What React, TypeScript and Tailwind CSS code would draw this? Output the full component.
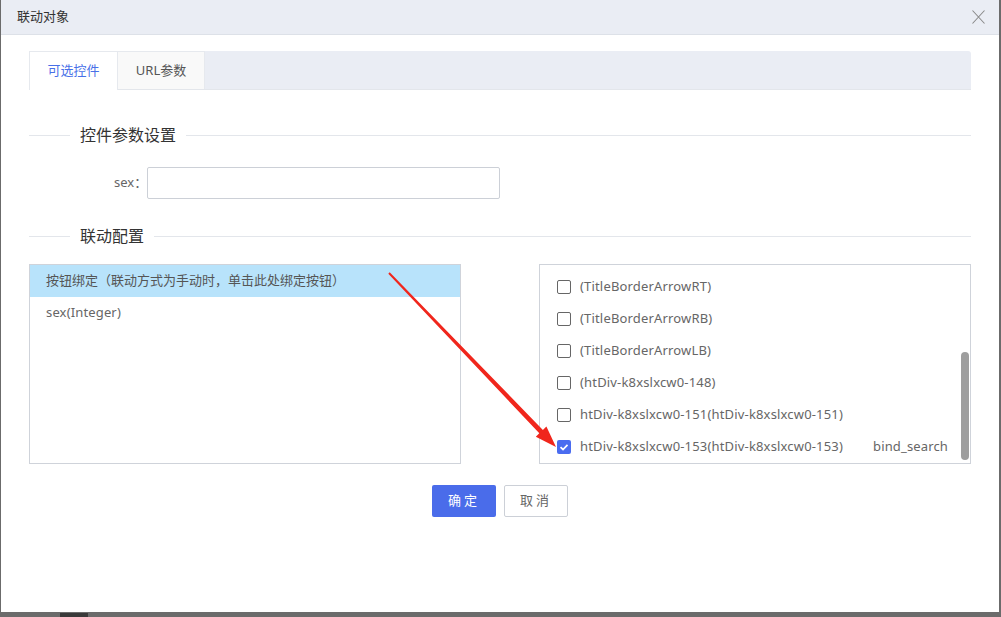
import { useState } from 'react';

type Target = {
    label: string;
    bind?: string;
    checked?: boolean;
};

const targets: Target[] = [
    { label: '(TitleBorderArrowRT)' },
    { label: '(TitleBorderArrowRB)' },
    { label: '(TitleBorderArrowLB)' },
    { label: '(htDiv-k8xslxcw0-148)' },
    { label: 'htDiv-k8xslxcw0-151(htDiv-k8xslxcw0-151)' },
    { label: 'htDiv-k8xslxcw0-153(htDiv-k8xslxcw0-153)', bind: 'bind_search', checked: true },
];

function SectionTitle({ title }: { title: string }) {
    return (
        <div className="flex items-center h-[20px]">
            <div className="w-[41px] h-px bg-[#e3e6eb]" />
            <span className="px-[10px] text-[16px] leading-[20px] text-[#333]">{title}</span>
            <div className="flex-1 h-px bg-[#e3e6eb]" />
        </div>
    );
}

function Checkbox({ checked }: { checked?: boolean }) {
    if (checked) {
        return (
            <span className="flex items-center justify-center w-[14px] h-[14px] rounded-[2px] bg-[#4a6cf0]">
                <svg width="12" height="12" viewBox="0 0 12 12">
                    <path d="M2.5 6.2 L5 8.5 L9.5 3.8" fill="none" stroke="#fff" strokeWidth="1.7" />
                </svg>
            </span>
        );
    }
    return <span className="w-[14px] h-[14px] rounded-[2px] border border-[#666] bg-white" />;
}

export default function App() {
    const [tab, setTab] = useState(0);
    const [sex, setSex] = useState('');

    return (
        <div className="relative w-[1001px] h-[617px] overflow-hidden bg-[#6b6b6b] font-['Noto_Sans','Noto_Sans_CJK_SC',sans-serif]">
            <div className="ml-[1px] w-[998px] h-[612px] bg-white flex flex-col">
                {/* header */}
                <div className="flex items-center justify-between h-[35px] pl-[16px] pr-[14px] bg-[#eaedf4] border-b border-[#dde1e8]">
                    <span className="text-[13px] text-[#333]">联动对象</span>
                    <svg width="13" height="14" viewBox="0 0 13 14">
                        <path d="M0.5 0.5 L12.5 13.5 M12.5 0.5 L0.5 13.5" stroke="#8a8a8a" strokeWidth="1.1" />
                    </svg>
                </div>

                <div className="flex flex-col px-[28px] pt-[16px]">
                    {/* tabs */}
                    <div className="flex h-[39px] bg-[#eaedf4] rounded-tr-[3px] border-b border-[#e3e6eb]">
                        <button
                            onClick={() => setTab(0)}
                            className={`w-[89px] h-[39px] text-[13px] border-l border-t border-r border-[#e6e9ee] ${tab === 0 ? 'bg-white text-[#4870e8]' : 'bg-[#f9f9f9] text-[#555]'}`}
                        >
                            可选控件
                        </button>
                        <button
                            onClick={() => setTab(1)}
                            className={`w-[87px] h-[38px] text-[13px] border-t border-r border-[#e6e9ee] ${tab === 1 ? 'bg-white text-[#4870e8]' : 'bg-[#f9f9f9] text-[#555]'}`}
                        >
                            URL参数
                        </button>
                    </div>

                    <div className="mt-[35px]">
                        <SectionTitle title="控件参数设置" />
                    </div>

                    <div className="flex items-center mt-[22px] pl-[85px]">
                        <span className="text-[13px] text-[#666]">sex：</span>
                        <input
                            value={sex}
                            onChange={(e) => setSex(e.target.value)}
                            className="w-[353px] h-[32px] border border-[#ccd0d7] rounded-[2px] px-2 text-[13px] outline-none"
                        />
                    </div>

                    <div className="mt-[27px]">
                        <SectionTitle title="联动配置" />
                    </div>

                    <div className="flex justify-between mt-[18px]">
                        <div className="w-[432px] h-[200px] border border-[#cfd3da]">
                            <div className="h-[32px] flex items-center pl-[16px] bg-[#b8e3fb] text-[13px] text-[#555]">
                                按钮绑定（联动方式为手动时，单击此处绑定按钮）
                            </div>
                            <div className="h-[32px] flex items-center pl-[16px] text-[13px] text-[#666] tracking-[0.15px]">
                                sex(Integer)
                            </div>
                        </div>

                        <div className="relative w-[432px] h-[200px] border border-[#cfd3da] overflow-hidden">
                            <div className="flex flex-col pt-[6px]">
                                {targets.map((t) => (
                                    <div key={t.label} className="flex items-center h-[32px] pl-[17px]">
                                        <Checkbox checked={t.checked} />
                                        <span className="ml-[9px] w-[293px] text-[13px] text-[#666] tracking-[0.17px] whitespace-nowrap">
                                            {t.label}
                                        </span>
                                        {t.bind && <span className="text-[13px] text-[#666] tracking-[0.15px]">{t.bind}</span>}
                                    </div>
                                ))}
                            </div>
                            <div className="absolute right-[1px] top-[87px] w-[8px] h-[108px] rounded-full bg-[#9e9e9e]" />
                        </div>
                    </div>

                    <div className="flex justify-center gap-[8px] mt-[21px]">
                        <button className="w-[64px] h-[32px] rounded-[2px] bg-[#4a6cea] text-white text-[13px] tracking-[3px]">
                            确定
                        </button>
                        <button className="w-[64px] h-[32px] rounded-[2px] border border-[#ccd0d7] bg-white text-[#666] text-[13px] tracking-[3px]">
                            取消
                        </button>
                    </div>
                </div>
            </div>

            {/* annotation arrow */}
            <svg className="absolute left-0 top-0 pointer-events-none" width="1001" height="617">
                <polygon
                    points="388.3,273.7 539.3,433.3 535.8,436.8 556,447 546.4,426.4 542.9,429.9 389.7,272.3"
                    fill="#f0261c"
                />
            </svg>

            <div className="absolute left-[60px] top-[613px] w-[28px] h-[4px] bg-[#3a3a3a]" />
        </div>
    );
}
